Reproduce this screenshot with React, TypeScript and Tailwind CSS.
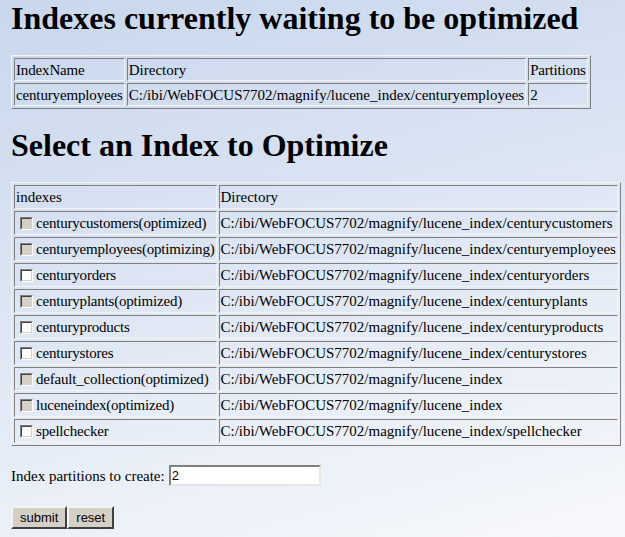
import React from "react";

const rows: { name: string; dir: string; disabled: boolean }[] = [
  { name: "centurycustomers(optimized)", dir: "C:/ibi/WebFOCUS7702/magnify/lucene_index/centurycustomers", disabled: true },
  { name: "centuryemployees(optimizing)", dir: "C:/ibi/WebFOCUS7702/magnify/lucene_index/centuryemployees", disabled: true },
  { name: "centuryorders", dir: "C:/ibi/WebFOCUS7702/magnify/lucene_index/centuryorders", disabled: false },
  { name: "centuryplants(optimized)", dir: "C:/ibi/WebFOCUS7702/magnify/lucene_index/centuryplants", disabled: true },
  { name: "centuryproducts", dir: "C:/ibi/WebFOCUS7702/magnify/lucene_index/centuryproducts", disabled: false },
  { name: "centurystores", dir: "C:/ibi/WebFOCUS7702/magnify/lucene_index/centurystores", disabled: false },
  { name: "default_collection(optimized)", dir: "C:/ibi/WebFOCUS7702/magnify/lucene_index", disabled: true },
  { name: "luceneindex(optimized)", dir: "C:/ibi/WebFOCUS7702/magnify/lucene_index", disabled: true },
  { name: "spellchecker", dir: "C:/ibi/WebFOCUS7702/magnify/lucene_index/spellchecker", disabled: false },
];

const tableCls =
  "border-separate border-spacing-[2px] border border-t-[#f4f4f4] border-l-[#f4f4f4] border-r-[#7f7f7f] border-b-[#7f7f7f]";
const cellCls =
  "border border-t-[#7f7f7f] border-l-[#7f7f7f] border-r-[#f4f4f4] border-b-[#f4f4f4] px-[1px] py-0 text-left font-normal whitespace-nowrap align-middle";

function Check({ disabled }: { disabled: boolean }) {
  return (
    <span
      className={`inline-block shrink-0 w-[13px] h-[13px] ml-[4px] mr-[3px] border border-t-[#808080] border-l-[#808080] border-r-[#ffffff] border-b-[#ffffff] ${
        disabled ? "bg-[#d4d0c8]" : "bg-white"
      }`}
    >
      <span className="block w-full h-full border border-t-[#404040] border-l-[#404040] border-r-[#d4d0c8] border-b-[#d4d0c8]" />
    </span>
  );
}

export default function App() {
  return (
    <div className="min-h-screen w-full bg-[linear-gradient(165deg,#c9d7ec_0%,#d3def0_25%,#dfe7f4_50%,#ebf0f8_75%,#f6f8fb_100%)] text-black font-['Liberation_Serif','Times_New_Roman',serif] text-[15px] leading-[18px]">
      <div className="pl-[11px] pt-0 pb-2">
        <h1 className="text-[32px] leading-[36px] font-bold m-0 pt-0 mb-[19px]">
          Indexes currently waiting to be optimized
        </h1>
        <table className={tableCls}>
          <tbody>
            <tr>
              <td className={`${cellCls} h-[23px] tracking-[-0.15px]`}>IndexName</td>
              <td className={`${cellCls} h-[23px]`}>Directory</td>
              <td className={`${cellCls} h-[23px] tracking-[-0.2px]`}>Partitions</td>
            </tr>
            <tr>
              <td className={`${cellCls} h-[23px] tracking-[-0.15px]`}>centuryemployees</td>
              <td className={`${cellCls} h-[23px]`}>C:/ibi/WebFOCUS7702/magnify/lucene_index/centuryemployees</td>
              <td className={`${cellCls} h-[23px]`}>2</td>
            </tr>
          </tbody>
        </table>
        <h2 className="text-[32px] leading-[36px] font-bold mt-[18px] mb-[19px]">
          Select an Index to Optimize
        </h2>
        <table className={tableCls}>
          <tbody>
            <tr>
              <td className={`${cellCls} h-[24px]`}>indexes</td>
              <td className={`${cellCls} h-[24px]`}>Directory</td>
            </tr>
            {rows.map((r) => (
              <tr key={r.name}>
                <td className={`${cellCls} h-[24px]`}>
                  <div className="flex items-center">
                    <Check disabled={r.disabled} />
                    <span className="tracking-[-0.2px]">{r.name}</span>
                  </div>
                </td>
                <td className={`${cellCls} h-[24px]`}>{r.dir}</td>
              </tr>
            ))}
          </tbody>
        </table>
        <div className="mt-[19px] flex items-center h-[21px]">
          <span>Index partitions to create:</span>
          <span className="ml-[4px] w-[152px] h-[21px] bg-white border-2 border-t-[#7f7f7f] border-l-[#7f7f7f] border-r-[#e6e6e6] border-b-[#e6e6e6] flex items-center pl-[1px] font-['Liberation_Sans',Arial,sans-serif] text-[13px]">
            2
          </span>
        </div>
        <div className="mt-[20px] flex">
          <button className="h-[23px] px-[7px] bg-[#d4d0c8] border-2 border-t-[#f4f4f4] border-l-[#f4f4f4] border-r-[#404040] border-b-[#404040] font-['Liberation_Sans',Arial,sans-serif] text-[13px] leading-[15px] text-black">
            submit
          </button>
          <button className="h-[23px] px-[7px] bg-[#d4d0c8] border-2 border-t-[#f4f4f4] border-l-[#f4f4f4] border-r-[#404040] border-b-[#404040] font-['Liberation_Sans',Arial,sans-serif] text-[13px] leading-[15px] text-black">
            reset
          </button>
        </div>
      </div>
    </div>
  );
}
